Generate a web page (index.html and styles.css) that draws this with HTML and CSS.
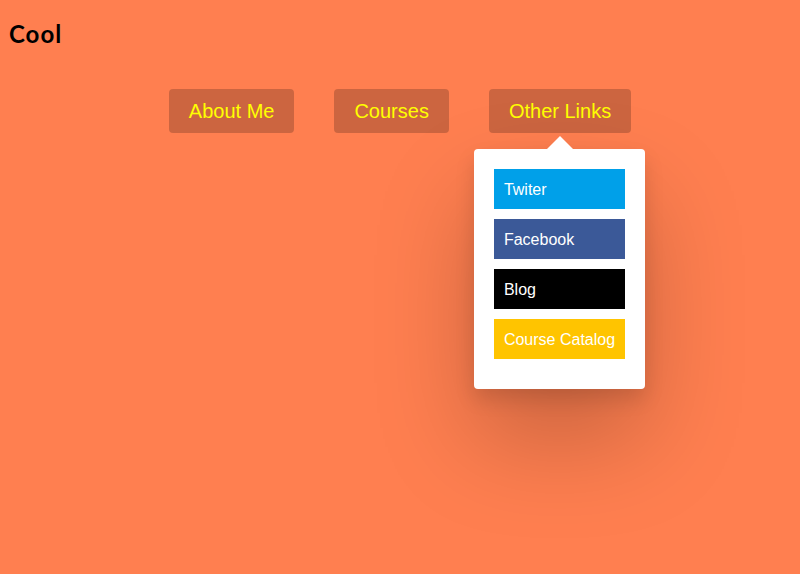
FILE: index.html
```html
<!DOCTYPE html>
<html>
<head>
<meta charset="utf-8">
<link rel="stylesheet" href="styles.css">
</head>
<body>
<header class="brand">Cool</header>
<nav class="nav">
  <div class="nav-item"><a class="nav-btn" href="#">About Me</a></div>
  <div class="nav-item"><a class="nav-btn" href="#">Courses</a></div>
  <div class="nav-item">
    <a class="nav-btn" href="#">Other Links</a>
    <div class="dropdown">
      <a class="dd-link twitter" href="#">Twiter</a>
      <a class="dd-link facebook" href="#">Facebook</a>
      <a class="dd-link blog" href="#">Blog</a>
      <a class="dd-link catalog" href="#">Course Catalog</a>
    </div>
  </div>
</nav>
</body>
</html>
```
FILE: styles.css
```css
html, body {
  margin: 0;
  padding: 0;
  height: 100%;
}
body {
  background: #ff7f50;
  font-family: "Liberation Sans", Arial, sans-serif;
}
.brand {
  font-family: Lato, "Liberation Sans", sans-serif;
  font-weight: 700;
  font-size: 24px;
  letter-spacing: 1px;
  line-height: 28px;
  padding: 20px 0 0 9px;
  color: #000;
}
.nav {
  display: flex;
  justify-content: center;
  gap: 40px;
  margin-top: 41px;
}
.nav-item {
  position: relative;
}
.nav-btn {
  display: block;
  padding: 10px 20px;
  line-height: 24px;
  font-size: 20px;
  color: #ffff00;
  text-decoration: none;
  background: rgba(0, 0, 0, 0.2);
  border-radius: 4px;
}
.dropdown {
  position: absolute;
  top: 60px;
  left: -15px;
  width: 131px;
  padding: 20px;
  background: #fff;
  border-radius: 4px;
  box-shadow: 0 50px 100px rgba(0, 0, 0, 0.22), 0 10px 20px rgba(0, 0, 0, 0.12);
}
.dropdown::before {
  content: "";
  position: absolute;
  top: -13px;
  left: 73px;
  border-left: 13px solid transparent;
  border-right: 13px solid transparent;
  border-bottom: 13px solid #fff;
}
.dd-link {
  display: block;
  height: 40px;
  line-height: 42px;
  padding-left: 10px;
  margin-bottom: 10px;
  font-size: 16px;
  color: #fff;
  text-decoration: none;
  white-space: nowrap;
  overflow: hidden;
}
.twitter { background: #00a0e9; }
.facebook { background: #3b5998; }
.blog { background: #000; }
.catalog { background: #ffc400; }
```
